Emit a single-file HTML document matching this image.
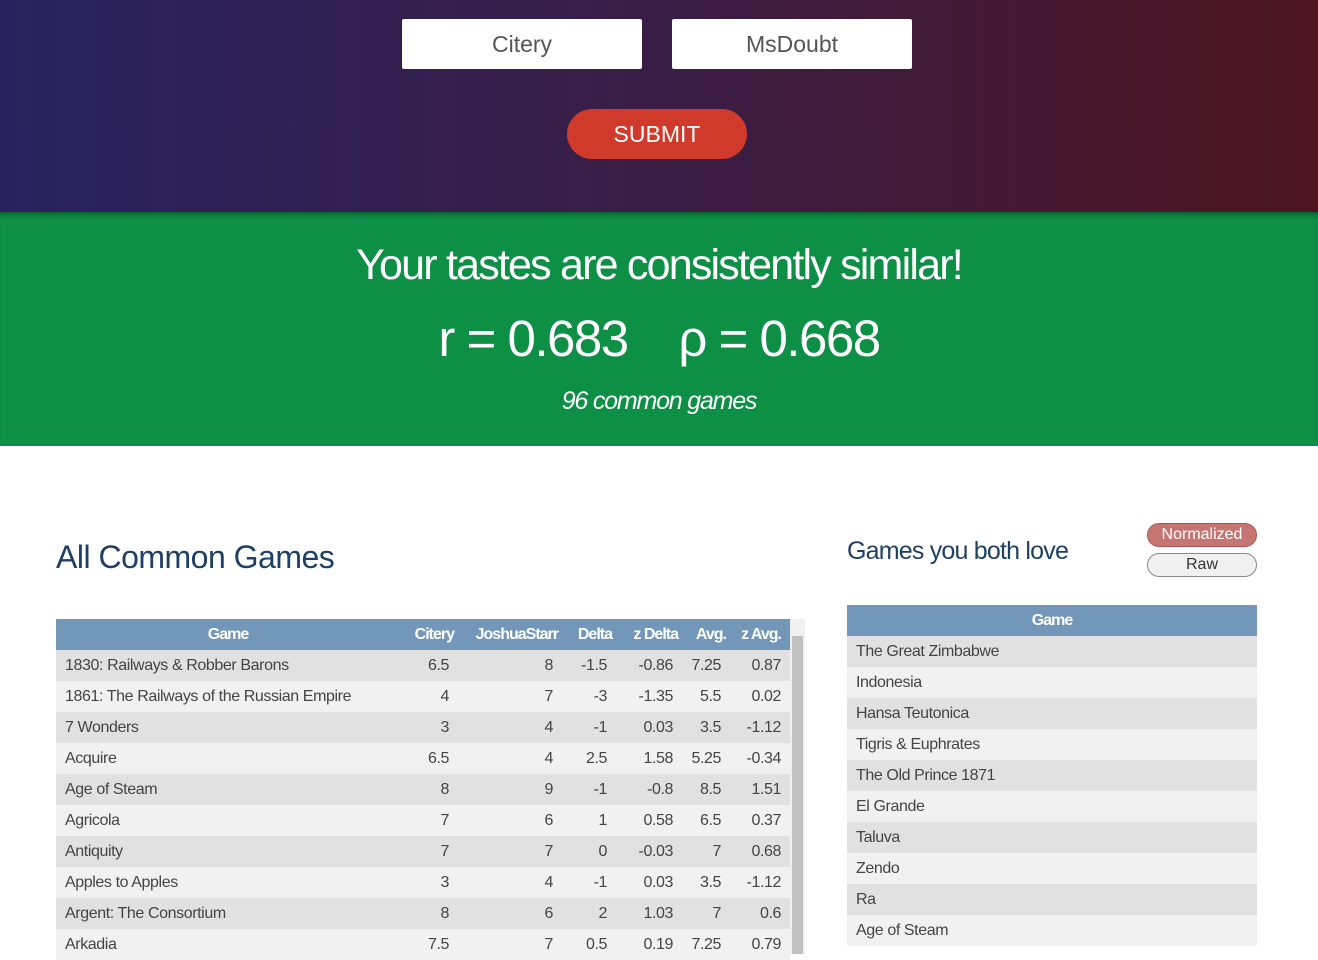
<!DOCTYPE html>
<html><head><meta charset="utf-8"><style>
*{margin:0;padding:0;box-sizing:border-box}
body{width:1318px;height:954px;overflow:hidden;font-family:"Liberation Sans",sans-serif;background:#fff;position:relative}
.hdr{position:absolute;left:0;top:0;width:1318px;height:212px;background:linear-gradient(90deg,#27225e 0%,#3a1d45 50%,#4c1520 100%)}
.inp{position:absolute;top:19px;width:240px;height:50px;background:#fff;border-radius:2px;font-size:23px;color:#555;text-align:center;line-height:50px}
.sub{position:absolute;left:567px;top:109px;width:180px;height:50px;background:#cf3a2b;border-radius:25px;color:#fff;font-size:23px;text-align:center;line-height:50px}
.grn{position:absolute;left:0;top:212px;width:1318px;height:234px;background:#0d8f46;color:#fff;text-align:center;box-shadow:inset 0 6px 6px -4px rgba(0,0,0,.4)}
h1{position:absolute;left:0;width:100%;top:29px;font-size:43px;font-weight:normal;letter-spacing:-1.8px}
.r{position:absolute;left:0;width:100%;top:97px;font-size:51px;letter-spacing:-1.5px}
.c{position:absolute;left:0;width:100%;top:175px;font-size:25px;font-style:italic;letter-spacing:-1.2px}
.t1{position:absolute;left:56px;top:539px;font-size:32px;color:#1e3f66;letter-spacing:-.5px}
.t2{position:absolute;left:847px;top:537px;font-size:25px;color:#1e3f66;letter-spacing:-.8px}
.btn{position:absolute;left:1147px;width:110px;height:24px;border-radius:12px;font-size:16px;text-align:center;line-height:22px}
table{position:absolute;border-collapse:collapse;font-size:16px;color:#444;table-layout:fixed}
th{background:#7397b9;color:#fff;height:31px;font-size:16px;letter-spacing:-1px;padding:0 9px;white-space:nowrap}
td{height:31px;padding:0 9px;letter-spacing:-.4px;white-space:nowrap}
tr:nth-child(even) td{background:#e1e1e1}
tr:nth-child(odd) td{background:#f1f1f1}
.n td{text-align:right}
.n td:first-child{text-align:left}
.n th{padding:0 4px}
.sb{position:absolute;left:790px;top:619px;width:15px;height:335px;background:#f0f0f0}
.sb div{position:absolute;left:2px;top:17px;width:11px;height:318px;background:#c1c1c1}
</style></head><body>
<div class="hdr">
<div class="inp" style="left:402px">Citery</div>
<div class="inp" style="left:672px">MsDoubt</div>
<div class="sub">SUBMIT</div>
</div>
<div class="grn">
<h1>Your tastes are consistently similar!</h1>
<div class="r">r = 0.683 &nbsp;&nbsp; ρ = 0.668</div>
<div class="c">96 common games</div>
</div>
<div class="t1">All Common Games</div>
<div class="t2">Games you both love</div>
<div class="btn" style="top:523px;background:#c57673;color:#fff;border:1px solid #a55">Normalized</div>
<div class="btn" style="top:553px;background:#f0f0f0;color:#333;border:1px solid #888">Raw</div>
<table class="n" style="left:56px;top:619px;width:734px">
<colgroup><col style="width:344px"><col style="width:58px"><col style="width:104px"><col style="width:54px"><col style="width:66px"><col style="width:48px"><col style="width:60px"></colgroup>
<tr><th>Game</th><th style="text-align:right">Citery</th><th style="text-align:right">JoshuaStarr</th><th style="text-align:right">Delta</th><th style="text-align:right">z Delta</th><th style="text-align:right">Avg.</th><th style="text-align:right;padding-right:9px">z Avg.</th></tr>
<tr><td>1830: Railways &amp; Robber Barons</td><td>6.5</td><td>8</td><td>-1.5</td><td>-0.86</td><td>7.25</td><td>0.87</td></tr>
<tr><td>1861: The Railways of the Russian Empire</td><td>4</td><td>7</td><td>-3</td><td>-1.35</td><td>5.5</td><td>0.02</td></tr>
<tr><td>7 Wonders</td><td>3</td><td>4</td><td>-1</td><td>0.03</td><td>3.5</td><td>-1.12</td></tr>
<tr><td>Acquire</td><td>6.5</td><td>4</td><td>2.5</td><td>1.58</td><td>5.25</td><td>-0.34</td></tr>
<tr><td>Age of Steam</td><td>8</td><td>9</td><td>-1</td><td>-0.8</td><td>8.5</td><td>1.51</td></tr>
<tr><td>Agricola</td><td>7</td><td>6</td><td>1</td><td>0.58</td><td>6.5</td><td>0.37</td></tr>
<tr><td>Antiquity</td><td>7</td><td>7</td><td>0</td><td>-0.03</td><td>7</td><td>0.68</td></tr>
<tr><td>Apples to Apples</td><td>3</td><td>4</td><td>-1</td><td>0.03</td><td>3.5</td><td>-1.12</td></tr>
<tr><td>Argent: The Consortium</td><td>8</td><td>6</td><td>2</td><td>1.03</td><td>7</td><td>0.6</td></tr>
<tr><td>Arkadia</td><td>7.5</td><td>7</td><td>0.5</td><td>0.19</td><td>7.25</td><td>0.79</td></tr>
</table>
<div class="sb"><div></div></div>
<table style="left:847px;top:605px;width:410px">
<tr><th>Game</th></tr>
<tr><td>The Great Zimbabwe</td></tr><tr><td>Indonesia</td></tr><tr><td>Hansa Teutonica</td></tr><tr><td>Tigris &amp; Euphrates</td></tr><tr><td>The Old Prince 1871</td></tr><tr><td>El Grande</td></tr><tr><td>Taluva</td></tr><tr><td>Zendo</td></tr><tr><td>Ra</td></tr><tr><td>Age of Steam</td></tr>
</table>
</body></html>
